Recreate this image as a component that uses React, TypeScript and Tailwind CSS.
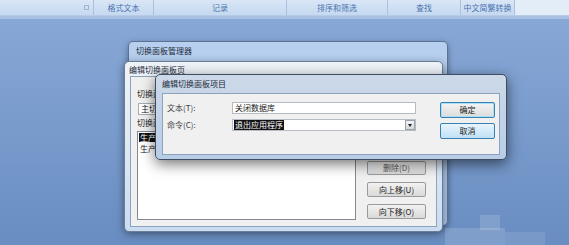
import React from 'react';

const font = { fontFamily: '"Noto Sans CJK SC", "Noto Sans", sans-serif' };

const RibbonGroup: React.FC<{ label: string; w: string }> = ({ label, w }) => (
  <div className={`${w} h-full flex items-center justify-center border-r border-[#a9c0df] text-[8px] text-[#4a74b0]`}>
    {label}
  </div>
);

const Button: React.FC<{ label: string; className?: string }> = ({ label, className = '' }) => (
  <div
    className={`flex items-center justify-center rounded-[2px] border text-[8px] text-[#222] ${className}`}
  >
    {label}
  </div>
);

export default function App() {
  return (
    <div className="relative w-[569px] h-[245px] overflow-hidden bg-gradient-to-b from-[#8aaad8] to-[#698dc1]" style={font}>
      {/* ribbon group labels */}
      <div className="h-[16px] flex bg-gradient-to-b from-[#d9e6f6] to-[#c6d9f0] border-b border-[#b6cbe6]">
        <div className="w-[94px] h-full flex items-center justify-end pr-[4px] border-r border-[#a9c0df]">
          <div className="w-[5px] h-[5px] border border-[#9fb4d0]" />
        </div>
        <RibbonGroup label="格式文本" w="w-[60px]" />
        <RibbonGroup label="记录" w="w-[133px]" />
        <RibbonGroup label="排序和筛选" w="w-[101px]" />
        <RibbonGroup label="查找" w="w-[73px]" />
        <RibbonGroup label="中文简繁转换" w="w-[54px]" />
        <div className="flex-1 bg-[#e3edf8]" />
      </div>
      <div className="h-[3px] bg-[#a7c0e3]" />

      {/* 切换面板管理器 */}
      <div className="absolute left-[128px] top-[41px] w-[320px] h-[185px] rounded-[5px] border border-[#5f7391] bg-gradient-to-b from-[#b8d0ef] to-[#a6c2e8] shadow-[0_2px_6px_rgba(0,0,0,0.35)]">
        <div className="pl-[7px] pt-[3px] text-[8px] text-[#1e2a3a]">切换面板管理器</div>
      </div>

      {/* 编辑切换面板页 */}
      <div className="absolute left-[124px] top-[61px] w-[319px] h-[171px] rounded-[5px] border border-[#6b7d96] bg-gradient-to-b from-[#eef3f8] via-[#dfe9f4] to-[#c9dcf1] shadow-[0_2px_8px_rgba(0,0,0,0.4)] flex flex-col">
        <div className="h-[14px] pl-[4px] pt-[1px] text-[8px] text-[#1e2a3a] leading-[13px]">编辑切换面板页</div>
        <div className="mx-[5px] mb-[4px] flex-1 border border-[#8da2bd] bg-[#f0f0f0] relative">
          <div className="pl-[6px] pt-[12px] text-[8px] text-[#222] leading-[10px]">切换面板</div>
          <div className="ml-[7px] mt-[4px] w-[40px] h-[12px] bg-white border border-[#a5acb5] pl-[2px] text-[8px] leading-[10px] text-[#222]">主切换</div>
          <div className="pl-[6px] mt-[3px] text-[8px] text-[#222] leading-[10px]">切换面板</div>
          <div className="ml-[6px] mt-[3px] w-[219px] h-[89px] bg-white border border-[#828790]">
            <div className="mx-[1px] mt-[1px] w-[40px] h-[9px] bg-[#111] text-white text-[8px] leading-[9px] pl-[1px]">生产计划</div>
            <div className="mx-[1px] mt-[2px] text-[#222] text-[8px] leading-[9px] pl-[1px]">生产计划</div>
          </div>
          <div className="absolute left-[236px] top-[84px] flex flex-col gap-[7px]">
            <Button label="删除(D)" className="w-[59px] h-[14px] border-[#9a9a9a] bg-gradient-to-b from-[#f2f2f2] to-[#d9d9d9] text-[#555]" />
            <Button label="向上移(U)" className="w-[59px] h-[15px] border-[#9a9a9a] bg-gradient-to-b from-[#f2f2f2] to-[#d9d9d9]" />
            <Button label="向下移(O)" className="w-[59px] h-[15px] border-[#9a9a9a] bg-gradient-to-b from-[#f2f2f2] to-[#d9d9d9]" />
          </div>
        </div>
      </div>

      {/* 编辑切换面板项目 */}
      <div className="absolute left-[155px] top-[74px] w-[352px] h-[86px] rounded-[5px] border border-[#3e4d63] bg-gradient-to-b from-[#ccd9e8] to-[#b8cde6] shadow-[0_4px_14px_rgba(0,0,0,0.55)] flex flex-col">
        <div className="h-[18px] pl-[6px] pt-[3px] text-[8px] text-[#1e2a3a] leading-[12px]">编辑切换面板项目</div>
        <div className="mx-[6px] mb-[4px] flex-1 border border-[#8da2bd] bg-[#f0f0f0] flex">
          <div className="w-[270px] pl-[4px] pt-[8px] flex flex-col gap-[5px]">
            <div className="flex items-center h-[12px]">
              <span className="w-[65px] text-[8px] text-[#444]">文本(T):</span>
              <div className="w-[184px] h-[12px] bg-white border border-[#b5bcc5] text-[8px] leading-[10px] pl-[2px] text-[#222]">关闭数据库</div>
            </div>
            <div className="flex items-center h-[12px]">
              <span className="w-[65px] text-[8px] text-[#444]">命令(C):</span>
              <div className="w-[184px] h-[12px] bg-white border border-[#b5bcc5] flex items-center justify-between">
                <span className="ml-[1px] h-[10px] bg-[#111] text-white text-[8px] leading-[10px] px-[1px]">退出应用程序</span>
                <div className="w-[10px] h-[10px] border border-[#9aa3ad] bg-gradient-to-b from-[#f4f4f4] to-[#d8d8d8] flex items-center justify-center">
                  <div className="w-0 h-0 border-x-[2px] border-x-transparent border-t-[3px] border-t-[#222]" />
                </div>
              </div>
            </div>
          </div>
          <div className="ml-[7px] pt-[8px] flex flex-col gap-[5px]">
            <Button label="确定" className="w-[55px] h-[16px] border-[#3c7fb1] bg-gradient-to-b from-[#f3f3f3] to-[#dcdcdc] shadow-[inset_0_0_0_1px_#a6e1f7]" />
            <Button label="取消" className="w-[55px] h-[16px] border-[#3c7fb1] bg-gradient-to-b from-[#e8f5fd] to-[#bfe1f6]" />
          </div>
        </div>
      </div>

      {/* pixelated watermark */}
      <div className="absolute left-[480px] top-[215px] w-[20px] h-[15px] bg-white/15" />
      <div className="absolute left-[445px] top-[228px] w-[60px] h-[17px] bg-white/15" />
      <div className="absolute left-[505px] top-[232px] w-[40px] h-[13px] bg-white/10" />
    </div>
  );
}
